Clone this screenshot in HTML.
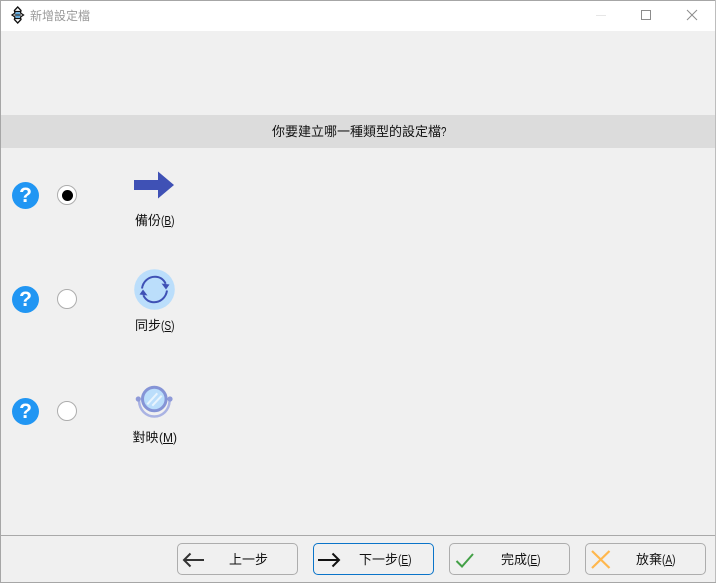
<!DOCTYPE html>
<html lang="zh-Hant"><head><meta charset="utf-8"><style>
html,body{margin:0;padding:0;background:#f0f0f0}
#w{position:relative;width:716px;height:583px;overflow:hidden;background:#f0f0f0;font-family:"Liberation Sans","Noto Sans CJK TC",sans-serif;font-size:13px;color:#111}
#w div,#w svg{position:absolute}
.lab{white-space:nowrap;line-height:16px}
.l{display:inline-block;transform:scaleX(.78);transform-origin:0 50%}
.u{text-decoration:underline}
.btn{box-sizing:border-box;top:543px;width:121px;height:32px;border:1px solid #adadad;border-radius:5px;background:#f0f0f0}
.bt{top:552px;white-space:nowrap;line-height:16px;color:#111}
.r{box-sizing:border-box;width:20px;height:20px;border:1px solid #adadad;border-radius:50%;background:#fff;left:57px}
#w .q{left:12px;width:27px;height:27px;border-radius:50%;background:#2196f3;color:#fff;font-weight:bold;font-size:21px;line-height:27px;text-align:center}
</style></head><body><div id="w">
<div style="left:0;top:0;width:716px;height:31px;background:#fff"></div>
<div style="left:0;top:0;width:716px;height:1px;background:#a6a6a6"></div>
<div style="left:0;top:0;width:1px;height:583px;background:#a6a6a6"></div>
<div style="left:715px;top:0;width:1px;height:583px;background:#bdbdbd"></div>
<div style="left:0;top:582px;width:716px;height:1px;background:#a6a6a6"></div>

<svg style="left:10px;top:6px" width="16" height="18" viewBox="0 0 16 18"><path d="M7.700 1 L11 4.500 L10.500 7 L13.500 9 L10.500 11 L11 13.500 L7.700 17 L4.400 13.500 L4.900 11 L2 9 L4.900 7 L4.400 4.500Z" fill="#fff" stroke="#111" stroke-width="1.300"/><path d="M4.500 5.500h6.400M4.500 9h6.400M4.500 12.500h6.400" stroke="#111" stroke-width="1.300"/><rect x="5.500" y="6.300" width="4.400" height="2" fill="#59a9e0"/><rect x="5.500" y="9.800" width="4.400" height="2" fill="#59a9e0"/></svg>
<div class="lab" style="left:30px;top:8px;color:#9a9a9a;font-size:12px">新增設定檔</div>

<div style="left:596px;top:15px;width:10px;height:1px;background:#e6e6e6"></div>
<div style="box-sizing:border-box;left:641px;top:10px;width:10px;height:10px;border:1px solid #8c8c8c"></div>
<svg style="left:686px;top:9px" width="12" height="12" viewBox="0 0 12 12"><path d="M1 1L11 11M11 1L1 11" stroke="#8c8c8c" stroke-width="1" fill="none"/></svg>

<div style="left:1px;top:115px;width:714px;height:33px;background:#dcdcdc"></div>
<div class="lab" style="left:272px;top:124px">你要建立哪一種類型的設定檔<span style="display:inline-block;transform:scaleX(.75);transform-origin:0 50%">?</span></div>

<div class="q" style="top:182px">?</div>
<div class="q" style="top:286px">?</div>
<div class="q" style="top:398px">?</div>

<div class="r" style="top:185px"></div>
<div style="left:61.500px;top:189.500px;width:11px;height:11px;border-radius:50%;background:#000"></div>
<div class="r" style="top:289px"></div>
<div class="r" style="top:401px"></div>

<svg style="left:134px;top:171px" width="41" height="28" viewBox="0 0 41 28"><path d="M0 9H24V0.500L40 14 24 27.500V19H0Z" fill="#3f51b5"/></svg>
<div class="lab" style="left:135px;top:213px">備份<span class="l">(<span class="u">B</span>)</span></div>

<svg style="left:134px;top:269px" width="41" height="41" viewBox="0 0 41 41"><circle cx="20.500" cy="20.500" r="20.300" fill="#bbdefb"/><path d="M8 19.500C9 12.500 14.500 7.800 21 7.800c4.500 0 8.500 2.500 10.700 7" fill="none" stroke="#3f51b5" stroke-width="2"/><path d="M27.500 14.500L35.500 15.500 32 20.500Z" fill="#3f51b5"/><path d="M33 21.500C32 28.500 26.500 33.200 20 33.200c-4.500 0-8.500-2.500-10.700-7" fill="none" stroke="#3f51b5" stroke-width="2"/><path d="M13.500 26.500L5.500 25.500 9 20.500Z" fill="#3f51b5"/></svg>
<div class="lab" style="left:135px;top:318px">同步<span class="l">(<span class="u">S</span>)</span></div>

<svg style="left:135px;top:384px" width="38" height="36" viewBox="0 0 38 36"><path d="M4 17C4.500 26 11 32.500 19.300 32.500S34.200 26 34.600 17" fill="none" stroke="#aab3e3" stroke-width="2.500"/><circle cx="3.300" cy="15" r="2.600" fill="#8f9ad8"/><circle cx="35" cy="15" r="2.600" fill="#8f9ad8"/><circle cx="19.300" cy="15" r="11.800" fill="#bbdefb" stroke="#8594d6" stroke-width="3"/><path d="M12.300 20.300L22.300 9.300M17.300 21.700L26.700 11.700" stroke="#e8f4fd" stroke-width="2" fill="none"/></svg>
<div class="lab" style="left:132.500px;top:430px">對映<span class="l" style="transform:scaleX(.92)">(<span class="u">M</span>)</span></div>

<div style="left:1px;top:535px;width:714px;height:1px;background:#a9a9a9"></div>

<div class="btn" style="left:177px"></div>
<svg style="left:182px;top:551px" width="22" height="18" viewBox="0 0 22 18"><path d="M22 9H2M8.500 2.500 2 9l6.500 6.500" fill="none" stroke="#333" stroke-width="2"/></svg>
<div class="bt" style="left:229px">上一步</div>

<div class="btn" style="left:313px;border-color:#0a74c9"></div>
<svg style="left:318px;top:551px" width="23" height="18" viewBox="0 0 23 18"><path d="M0 9H21M14.500 2.500l6.500 6.500-6.500 6.500" fill="none" stroke="#111" stroke-width="2"/></svg>
<div class="bt" style="left:359px">下一步<span class="l">(<span class="u">E</span>)</span></div>

<div class="btn" style="left:449px"></div>
<svg style="left:455px;top:552px" width="20" height="18" viewBox="0 0 20 18"><path d="M1.500 9 7 14.500 18 2" fill="none" stroke="#43a047" stroke-width="2"/></svg>
<div class="bt" style="left:501px">完成<span class="l">(<span class="u">E</span>)</span></div>

<div class="btn" style="left:585px"></div>
<svg style="left:591px;top:550px" width="20" height="19" viewBox="0 0 20 19"><path d="M1 1 18.500 18M18.500 1 1 18" fill="none" stroke="#ffb74d" stroke-width="2.200"/></svg>
<div class="bt" style="left:636px">放棄<span class="l">(<span class="u">A</span>)</span></div>
</div></body></html>
